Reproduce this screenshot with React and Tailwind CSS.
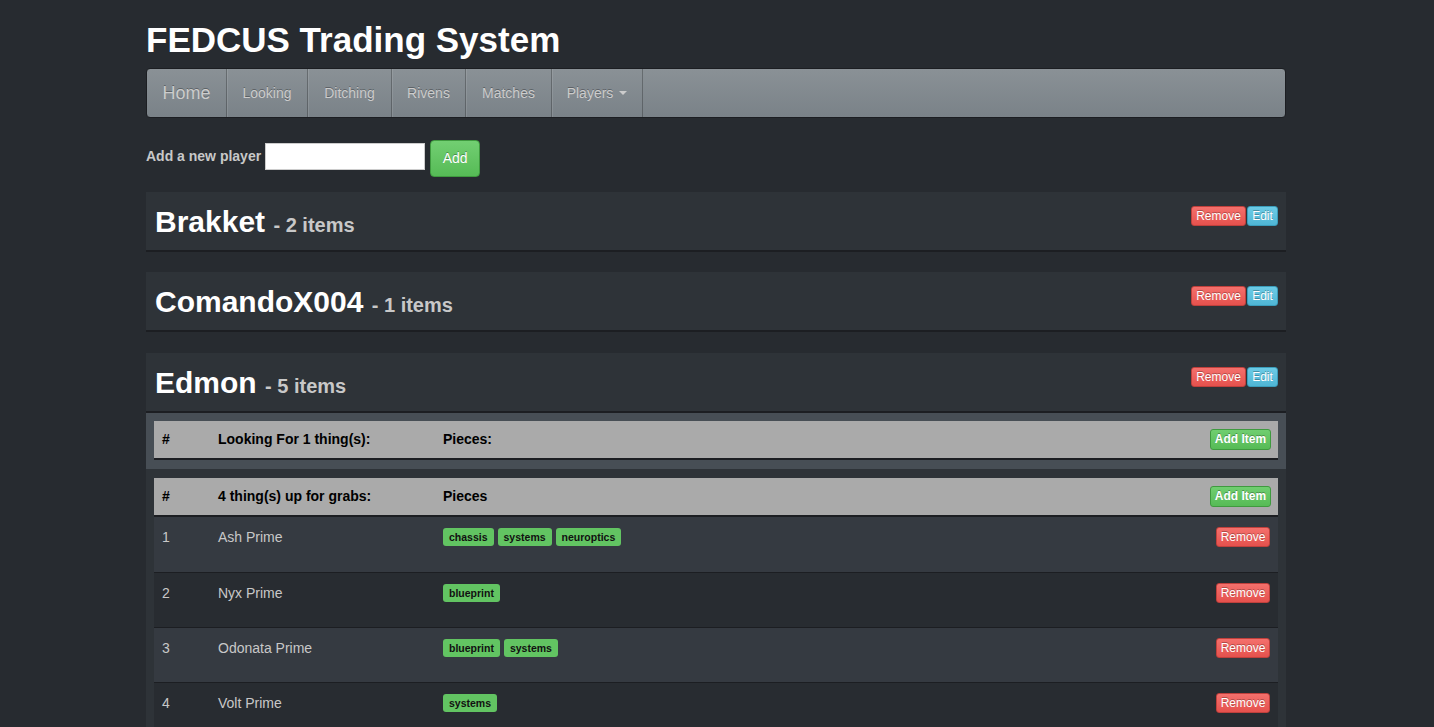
import React from "react";

const font = "font-['Liberation_Sans',Arial,sans-serif]";

const navItems = [
  { label: "Looking", w: "w-[81px]" },
  { label: "Ditching", w: "w-[84px]" },
  { label: "Rivens", w: "w-[74px]" },
  { label: "Matches", w: "w-[86px]" },
];

const players = [
  { name: "Brakket", count: 2 },
  { name: "ComandoX004", count: 1 },
];

const grabs = [
  { id: 1, name: "Ash Prime", pieces: ["chassis", "systems", "neuroptics"] },
  { id: 2, name: "Nyx Prime", pieces: ["blueprint"] },
  { id: 3, name: "Odonata Prime", pieces: ["blueprint", "systems"] },
  { id: 4, name: "Volt Prime", pieces: ["systems"] },
];

const shadow = "[text-shadow:0_-1px_0_rgba(0,0,0,0.3)]";

const RemoveBtn = ({ w = "w-[55px]" }) => (
  <button
    className={`${w} h-[20px] text-[12px] leading-[18px] text-white rounded-[3px] border border-[#c0403c] bg-gradient-to-b from-[#f4706c] to-[#e5514d] ${shadow}`}
  >
    Remove
  </button>
);

const AddItemBtn = () => (
  <button
    className={`w-[61px] h-[21px] text-[12px] leading-[19px] text-white rounded-[3px] border border-[#3f9a3f] bg-gradient-to-b from-[#70ce70] to-[#56bb56] ${shadow}`}
  >
    Add Item
  </button>
);

const PanelHeading = ({ name, count }) => (
  <div className="flex items-start justify-between bg-[#2e3338] pl-[9px] pr-[8px] h-[60px] border-b-2 border-[#1c1e22]">
    <h2 className="pt-[12px] text-white font-bold text-[30px] leading-[36px]">
      {name}{" "}
      <span className="text-[20px] text-[#c8c8c8]">- {count} items</span>
    </h2>
    <div className="flex pt-[14px]">
      <RemoveBtn />
      <button
        className={`ml-[1px] w-[31px] h-[20px] text-[12px] leading-[18px] text-white rounded-[3px] border border-[#3a9dbb] bg-gradient-to-b from-[#6ccbe6] to-[#4fb6d5] ${shadow}`}
      >
        Edit
      </button>
    </div>
  </div>
);

const TableHead = ({ title, pieces }) => (
  <div className="flex items-center h-[39px] bg-[#aaaaaa] border-b-2 border-[#1c1e22] text-[14px] font-bold text-black pr-[7px]">
    <div className="w-[64px] pl-[8px]">#</div>
    <div className="w-[225px]">{title}</div>
    <div className="flex-1">{pieces}</div>
    <AddItemBtn />
  </div>
);

const navLink = `flex items-center justify-center text-[#cccccc] border-r border-r-black/25 ${shadow}`;

export default function App() {
  return (
    <div className={`min-h-screen bg-[#272b30] ${font}`}>
      <div className="ml-[146px] w-[1140px]">
        <h1 className="pt-[20px] mb-[8px] text-white font-bold text-[35px] leading-[40px]">
          FEDCUS Trading System
        </h1>

        <nav className="flex h-[50px] rounded-[4px] border border-[#1c1e22] bg-gradient-to-b from-[#8a9196] to-[#7a8288] overflow-hidden">
          <a className={`${navLink} w-[80px] text-[18px]`}>Home</a>
          {navItems.map((item) => (
            <a
              key={item.label}
              className={`${navLink} ${item.w} text-[14px] shadow-[inset_1px_0_0_rgba(255,255,255,0.1)]`}
            >
              {item.label}
            </a>
          ))}
          <a
            className={`${navLink} w-[91px] text-[14px] shadow-[inset_1px_0_0_rgba(255,255,255,0.1)]`}
          >
            Players
            <span className="ml-[6px] inline-block w-0 h-0 border-x-[4px] border-x-transparent border-t-[4px] border-t-[#cccccc]" />
          </a>
        </nav>

        <form className="flex items-start mt-[22px] h-[37px]">
          <label className="mt-[6px] text-[14px] leading-[20px] font-bold text-[#c8c8c8] mr-[4px]">
            Add a new player
          </label>
          <input className="mt-[3px] w-[160px] h-[27px] bg-white border border-[#cccccc] outline-none" />
          <button
            className={`ml-[5px] w-[50px] h-[37px] rounded-[4px] border border-[#3f9a3f] text-[14px] text-white bg-gradient-to-b from-[#72cf72] to-[#56bb56] ${shadow}`}
          >
            Add
          </button>
        </form>

        <div className="mt-[15px] flex flex-col gap-[20px]">
          {players.map((p) => (
            <PanelHeading key={p.name} name={p.name} count={p.count} />
          ))}

          <div className="mt-[1px]">
            <PanelHeading name="Edmon" count={5} />

            <div className="bg-[#474e55] px-[8px] pt-[8px] pb-[9px]">
              <TableHead title="Looking For 1 thing(s):" pieces="Pieces:" />
            </div>

            <div className="bg-[#2e3338] px-[8px] pt-[9px]">
              <TableHead title="4 thing(s) up for grabs:" pieces="Pieces" />
              {grabs.map((g, i) => (
                <div
                  key={g.id}
                  className={`flex items-start h-[55px] pt-[10px] pr-[8px] text-[14px] leading-[20px] text-[#c8c8c8] ${
                    i > 0 ? "border-t border-[#1c1e22]" : ""
                  } ${i % 2 === 0 ? "bg-[#353a41]" : "bg-[#282c31]"}`}
                >
                  <div className="w-[64px] pl-[8px]">{g.id}</div>
                  <div className="w-[225px]">{g.name}</div>
                  <div className="flex-1 flex gap-[4px] pt-[1px]">
                    {g.pieces.map((piece) => (
                      <span
                        key={piece}
                        className="h-[18px] px-[6px] rounded-[3px] bg-[#62c462] text-[10.5px] leading-[18px] font-bold text-[#111]"
                      >
                        {piece}
                      </span>
                    ))}
                  </div>
                  <RemoveBtn w="w-[54px]" />
                </div>
              ))}
            </div>
          </div>
        </div>
      </div>
    </div>
  );
}
